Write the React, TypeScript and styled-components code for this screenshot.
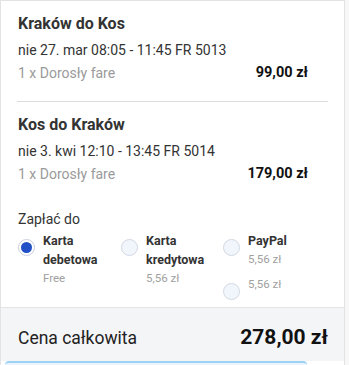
import styled, { createGlobalStyle } from "styled-components";

const GlobalStyle = createGlobalStyle`
  html, body {
    margin: 0;
    padding: 0;
    background: #f7f7f7;
  }
  body {
    font-family: Roboto, "Liberation Sans", Arial, sans-serif;
    color: #333;
  }
`;

const Card = styled.div`
  width: 345px;
  box-sizing: border-box;
  background: #fff;
  border: 1px solid #e3e3e3;
  border-bottom: none;
`;

const Flight = styled.div`
  padding: 13px 18px 18px 17px;
`;

const Divider = styled.hr`
  margin: 0 16px 0 16px;
  border: none;
  border-top: 1px solid #dcdcdc;
`;

const Title = styled.div`
  font-size: 16px;
  font-weight: 700;
  line-height: 20px;
  color: #333;
`;

const Times = styled.div`
  margin-top: 6px;
  font-size: 14px;
  line-height: 20px;
  color: #333;
`;

const FareRow = styled.div`
  margin-top: 3px;
  display: flex;
  justify-content: space-between;
  padding-right: 18px;
  font-size: 14px;
  line-height: 20px;
`;

const FareLabel = styled.span`
  color: #9a9a9a;
`;

const FarePrice = styled.span`
  font-size: 14.5px;
  font-weight: 700;
  color: #111;
`;

const Payment = styled.div`
  padding: 7px 18px 7px 17px;
`;

const PayTitle = styled.div`
  font-size: 14px;
  line-height: 20px;
  color: #333;
`;

const Options = styled.div`
  display: grid;
  grid-template-columns: 103px 102px 1fr;
  margin-top: 2px;
`;

const Column = styled.div`
  display: flex;
  flex-direction: column;
  gap: 6px;
`;

const Option = styled.label`
  display: flex;
  align-items: flex-start;
  gap: 8px;
`;

const Radio = styled.span<{ $checked?: boolean }>`
  flex: none;
  margin-top: 8px;
  width: 17px;
  height: 17px;
  box-sizing: border-box;
  border-radius: 50%;
  border: 1px solid ${(p) => (p.$checked ? "#c9d0e2" : "#d3d8e2")};
  background: ${(p) => (p.$checked ? "#fff" : "#f1f5fc")};
  display: flex;
  align-items: center;
  justify-content: center;
  &::after {
    content: "";
    display: ${(p) => (p.$checked ? "block" : "none")};
    width: 11px;
    height: 11px;
    border-radius: 50%;
    background: #2250c6;
  }
`;

const OptionText = styled.div`
  display: flex;
  flex-direction: column;
`;

const OptionName = styled.div`
  font-size: 12.5px;
  font-weight: 700;
  line-height: 19px;
  color: #333;
`;

const OptionFee = styled.div`
  font-size: 11.5px;
  line-height: 19px;
  color: #a0a0a0;
`;

const Footer = styled.div`
  display: flex;
  justify-content: space-between;
  align-items: baseline;
  height: 54px;
  box-sizing: border-box;
  padding: 16px 16px 0 17px;
  background: #f4f5f7;
  border-top: 1px solid #e2e4e8;
`;

const TotalLabel = styled.span`
  font-size: 17.5px;
  line-height: 26px;
  color: #222;
`;

const TotalPrice = styled.span`
  font-size: 21px;
  font-weight: 700;
  line-height: 26px;
  color: #111;
`;

const NextButton = styled.div`
  margin-left: 4px;
  width: 302px;
  height: 8px;
  border-top: 2px solid #9dd2f4;
  border-radius: 4px 4px 0 0;
  background: #eaf5fd;
`;

const flights = [
  {
    title: "Kraków do Kos",
    times: "nie 27. mar 08:05 - 11:45 FR 5013",
    price: "99,00 zł",
  },
  {
    title: "Kos do Kraków",
    times: "nie 3. kwi 12:10 - 13:45 FR 5014",
    price: "179,00 zł",
  },
];

export default function App() {
  return (
    <>
      <GlobalStyle />
      <Card>
        {flights.map((f, i) => (
          <div key={f.title}>
            {i > 0 && <Divider />}
            <Flight>
              <Title>{f.title}</Title>
              <Times>{f.times}</Times>
              <FareRow>
                <FareLabel>1 x Dorosły fare</FareLabel>
                <FarePrice>{f.price}</FarePrice>
              </FareRow>
            </Flight>
          </div>
        ))}
        <Payment>
          <PayTitle>Zapłać do</PayTitle>
          <Options>
            <Column>
              <Option>
                <Radio $checked />
                <OptionText>
                  <OptionName>Karta</OptionName>
                  <OptionName>debetowa</OptionName>
                  <OptionFee>Free</OptionFee>
                </OptionText>
              </Option>
            </Column>
            <Column>
              <Option>
                <Radio />
                <OptionText>
                  <OptionName>Karta</OptionName>
                  <OptionName>kredytowa</OptionName>
                  <OptionFee>5,56 zł</OptionFee>
                </OptionText>
              </Option>
            </Column>
            <Column>
              <Option>
                <Radio />
                <OptionText>
                  <OptionName>PayPal</OptionName>
                  <OptionFee>5,56 zł</OptionFee>
                </OptionText>
              </Option>
              <Option>
                <Radio />
                <OptionText>
                  <OptionFee>5,56 zł</OptionFee>
                </OptionText>
              </Option>
            </Column>
          </Options>
        </Payment>
        <Footer>
          <TotalLabel>Cena całkowita</TotalLabel>
          <TotalPrice>278,00 zł</TotalPrice>
        </Footer>
        <NextButton />
      </Card>
    </>
  );
}
